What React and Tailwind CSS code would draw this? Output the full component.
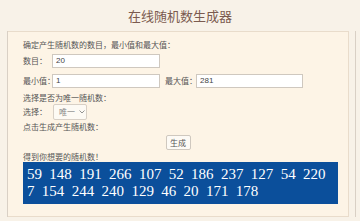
import React from "react";

const cjk = { fontFamily: '"Noto Sans CJK SC", "Noto Sans", sans-serif' };

const Field = ({ value, className }) => (
  <div
    className={`h-[14px] shrink-0 bg-white border border-[#cfc8bf] flex items-center pl-[3px] text-[8px] text-[#444] ${className}`}
    style={{ fontFamily: '"Liberation Sans", sans-serif' }}
  >
    {value}
  </div>
);

const RandomGenerator = () => {
  const line1 = [59, 148, 191, 266, 107, 52, 186, 237, 127, 54, 220];
  const line2 = [7, 154, 244, 240, 129, 46, 20, 171, 178];

  return (
    <div className="w-[360px] h-[221px] bg-[#f8f2e8] overflow-hidden" style={cjk}>
      {/* Title */}
      <div className="h-[31px] flex items-center justify-center text-[13px] text-[#7b5b4f]">
        在线随机数生成器
      </div>

      <div className="ml-[7px] mr-[4px] h-[186px] border-l border-r border-[#d9d0c5]">
        <div className="mr-[6px] h-[186px] bg-[#fdf4e6] border-t border-r border-b border-[#e9dccb] pl-[15px] pr-[10px] text-[8px] text-[#555] whitespace-nowrap">
          <div className="mt-[7px] h-[12px] flex items-center">
            确定产生随机数的数目，最小值和最大值：
          </div>

          <div className="mt-[3px] h-[14px] flex items-center">
            <span className="w-[29px] shrink-0">数目：</span>
            <Field value="20" className="w-[108px]" />
          </div>

          <div className="mt-[6px] h-[14px] flex items-center">
            <span className="w-[29px] shrink-0">最小值：</span>
            <Field value="1" className="w-[108px]" />
            <span className="ml-[5px] w-[31px] shrink-0">最大值：</span>
            <Field value="281" className="w-[107px]" />
          </div>

          <div className="mt-[4px] h-[12px] flex items-center">
            选择是否为唯一随机数：
          </div>

          <div className="h-[16px] flex items-center">
            <span className="w-[30px] shrink-0">选择：</span>
            <div className="w-[34px] h-[16px] bg-[#fdfaf4] border border-[#d8d0c6] rounded-[2px] flex items-center pl-[5px] text-[#888]">
              唯一
              <svg className="ml-[4px]" width="6" height="4" viewBox="0 0 6 4">
                <path d="M0.5 0.5 L3 3 L5.5 0.5" fill="none" stroke="#888" strokeWidth="0.9" />
              </svg>
            </div>
          </div>

          <div className="mt-[1px] h-[12px] flex items-center">
            点击生成产生随机数：
          </div>

          <div className="mt-[2px] h-[15px] flex justify-center pr-[5px]">
            <div className="w-[25px] h-[15px] bg-[#fdfaf5] border border-[#cfc8bf] rounded-[2px] flex items-center justify-center text-[#555]">
              生成
            </div>
          </div>

          <div className="mt-[1px] h-[11px] flex items-center">
            得到你想要的随机数！
          </div>

          <div
            className="h-[42px] bg-[#0b4f9b] text-white text-[15px] leading-[17px] pl-[4px] pt-[4px]"
            style={{ fontFamily: '"Liberation Serif", serif', wordSpacing: "3.6px" }}
          >
            <div>{line1.join(" ")}</div>
            <div>{line2.join(" ")}</div>
          </div>
        </div>
      </div>
    </div>
  );
};

export default function App() {
  return <RandomGenerator />;
}
